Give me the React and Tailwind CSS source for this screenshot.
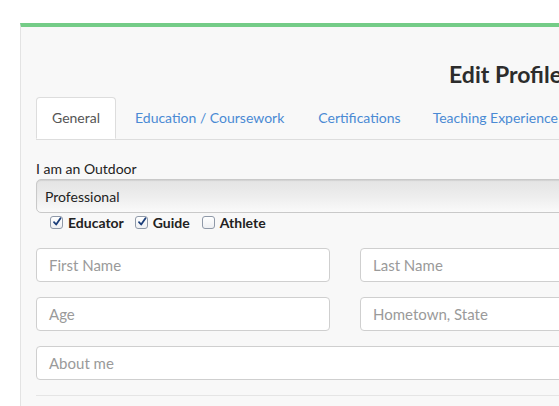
import React from "react";

function Check({ checked }) {
  return (
    <span className="inline-flex items-center justify-center w-[13px] h-[13px] rounded-[3px] border border-[#8f99a8] bg-gradient-to-b from-white to-[#eef0f3]">
      {checked && (
        <svg width="12" height="12" viewBox="0 0 12 12" className="-mt-[1px] ml-[1px]">
          <path d="M2.4 6.2 L5 9 L10.2 1.6" fill="none" stroke="#1b3e7a" strokeWidth="2.2" strokeLinecap="round" strokeLinejoin="round" />
        </svg>
      )}
    </span>
  );
}

function Input({ ph, className = "" }) {
  return (
    <div className={"h-[34px] rounded-[4px] border border-[#cfcfcf] bg-white flex items-center px-[12px] text-[15px] text-[#9a9a9a] " + className}>
      {ph}
    </div>
  );
}

export default function App() {
  return (
    <div className="w-[559px] h-[406px] overflow-hidden bg-white" style={{ fontFamily: "Lato, 'Open Sans', sans-serif" }}>
      <div className="pt-[23px] pl-[20px]">
        <div className="w-[970px] bg-[#f8f8f8] border-t-[4px] border-[#74cc87] border-l border-l-[#e3e3e3] min-h-[400px]">
          <div className="px-[15px]">
            <h1 className="text-center text-[23px] font-bold text-[#2c2c2c] pt-[33px] h-[70px] leading-[28px]">Edit Profile</h1>
            <ul className="flex border-b border-[#dddddd] text-[14px] leading-[20px]">
              <li className="mr-[2px] -mb-[1px]">
                <span className="block px-[15px] py-[10px] bg-white border border-[#dddddd] border-b-transparent rounded-t-[4px] text-[#555]">General</span>
              </li>
              <li className="mr-[2px]">
                <span className="block px-[16px] py-[10px] border border-transparent text-[#4a8ad4]">Education / Coursework</span>
              </li>
              <li className="mr-[2px]">
                <span className="block px-[14px] py-[10px] border border-transparent text-[#4a8ad4]">Certifications</span>
              </li>
              <li className="mr-[2px]">
                <span className="block px-[14px] py-[10px] border border-transparent text-[#4a8ad4]">Teaching Experience</span>
              </li>
            </ul>
            <div className="pt-[21px] text-[14px] leading-[16px] text-[#222]">I am an Outdoor</div>
            <div className="mt-[2px] h-[34px] rounded-[5px] border border-[#c9c9c9] bg-gradient-to-b from-[#e4e4e4] via-[#ededed] to-[#fafafa] flex items-center pl-[8px] text-[14px] text-[#222] shadow-[inset_0_1px_1px_rgba(0,0,0,0.08)]">
              Professional
            </div>
            <div className="flex items-center pl-[14px] h-[18px] text-[14px] font-bold text-[#222]">
              <Check checked />
              <span className="ml-[5px] mr-[11px]">Educator</span>
              <Check checked />
              <span className="ml-[5px] mr-[12px]">Guide</span>
              <Check />
              <span className="ml-[5px]">Athlete</span>
            </div>
            <div className="mt-[17px] grid grid-cols-[294px_294px] gap-x-[30px] gap-y-[15px]">
              <Input ph="First Name" />
              <Input ph="Last Name" />
              <Input ph="Age" />
              <Input ph="Hometown, State" />
            </div>
            <Input ph="About me" className="mt-[15px]" />
            <div className="mt-[15px] border-t border-[#e5e5e5]"></div>
          </div>
        </div>
      </div>
    </div>
  );
}
